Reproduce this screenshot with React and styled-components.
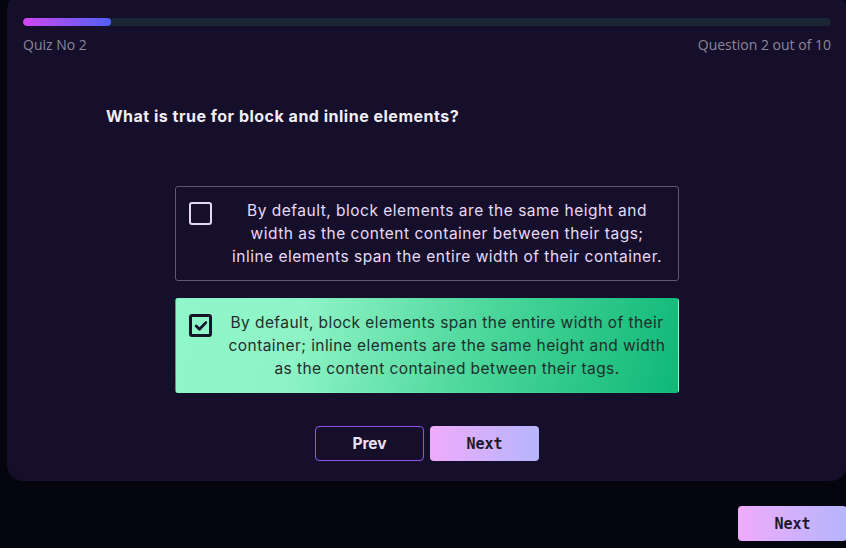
import React, { useState } from 'react'
import styled, { createGlobalStyle } from 'styled-components'

const GlobalStyle = createGlobalStyle`
  html, body {
    margin: 0;
    padding: 0;
    background: #05050f;
    overflow: hidden;
  }
  * { box-sizing: border-box; }
`;

const options = [
  { text: 'By default, block elements are the same height and width as the content container between their tags; inline elements span the entire width of their container.', spacing: 0.5 },
  { text: 'By default, block elements span the entire width of their container; inline elements are the same height and width as the content contained between their tags.', spacing: 0.42 },
];

function CheckBox({ checked }) {
  return (
    <Box checked={checked}>
      {checked && (
        <svg width="14" height="12" viewBox="0 0 14 12">
          <path d="M2.2 6 L5.5 9.2 L11.8 2.6" fill="none" stroke="#141428" strokeWidth="2.8" strokeLinecap="round" strokeLinejoin="round" />
        </svg>
      )}
    </Box>
  );
}

function App() {
  const [selected, setSelected] = useState(1);

  return <>
    <GlobalStyle />
    <Page>
      <Card>
        <Track>
          <Fill style={{ width: `${(2 / 10) * 100 * 0.545}%` }} />
        </Track>
        <Header>
          <span>Quiz No 2</span>
          <span>Question 2 out of 10</span>
        </Header>
        <Question>What is true for block and inline elements?</Question>
        <Options>
          {options.map((opt, i) => (
            <Option key={i} checked={selected === i} onClick={() => setSelected(i)}>
              <CheckBox checked={selected === i} />
              <OptionText checked={selected === i} spacing={opt.spacing}>{opt.text}</OptionText>
            </Option>
          ))}
        </Options>
        <Buttons>
          <PrevButton>Prev</PrevButton>
          <NextButton>Next</NextButton>
        </Buttons>
      </Card>
      <Footer>
        <NextButton>Next</NextButton>
      </Footer>
    </Page>
  </>
}

export default App

const Page = styled.div`
    width: 846px;
    height: 548px;
    padding-left: 7px;
    margin-top: -6px;
`;
const Card = styled.div`
    width: 840px;
    background: #150f2b;
    border-radius: 16px;
    padding: 24px 16px 20px 16px;
    display: flex;
    flex-direction: column;
`;
const Track = styled.div`
    height: 8px;
    width: 808px;
    border-radius: 4px;
    background: #1a2535;
    overflow: hidden;
`;
const Fill = styled.div`
    height: 100%;
    border-radius: 4px;
    background: linear-gradient(90deg, #d246f2, #4f60f8);
`;
const Header = styled.div`
    width: 808px;
    margin-top: 10px;
    display: flex;
    justify-content: space-between;
    font-family: "Open Sans", sans-serif;
    font-size: 14px;
    line-height: 18px;
    color: #8b8799;
`;
const Question = styled.div`
    margin: 52px 0 0 83px;
    font-family: Inter, sans-serif;
    font-weight: 700;
    font-size: 16px;
    line-height: 20px;
    letter-spacing: 0.5px;
    color: #f1eef6;
`;
const Options = styled.div`
    margin-top: 60px;
    display: flex;
    flex-direction: column;
    align-items: center;
    gap: 17px;
`;
const Option = styled.div`
    width: 504px;
    height: 95px;
    display: flex;
    align-items: flex-start;
    padding: 12px 12px 0 13px;
    gap: 16px;
    border-radius: 3px;
    cursor: pointer;
    border: 1px solid ${p => p.checked ? 'transparent' : '#5f5a72'};
    background: ${p => p.checked ? 'linear-gradient(105deg, #90f7ca 0%, #8ef3c6 25%, #4cd79b 60%, #0fb877 100%)' : 'transparent'};
`;
const Box = styled.div`
    flex: none;
    width: 23px;
    height: 23px;
    margin-top: 3px;
    border-radius: 3px;
    border: ${p => p.checked ? '3px solid #141428' : '2.5px solid #e6d6f6'};
    display: flex;
    align-items: center;
    justify-content: center;
`;
const OptionText = styled.div`
    flex: 1;
    text-align: center;
    font-family: Inter, sans-serif;
    font-size: 15.5px;
    line-height: 23px;
    letter-spacing: ${p => p.spacing}px;
    color: ${p => p.checked ? '#1e2e2a' : '#e8d9f6'};
`;
const Buttons = styled.div`
    margin-top: 33px;
    display: flex;
    justify-content: center;
    gap: 6px;
`;
const PrevButton = styled.div`
    width: 109px;
    height: 35px;
    display: flex;
    align-items: center;
    justify-content: center;
    border: 1px solid #8a55e6;
    border-radius: 4px;
    cursor: pointer;
    font-family: Inter, sans-serif;
    font-weight: 700;
    font-size: 15.5px;
    color: #ebe2f6;
`;
const NextButton = styled.div`
    width: 109px;
    height: 35px;
    display: flex;
    align-items: center;
    justify-content: center;
    border-radius: 4px;
    cursor: pointer;
    background: linear-gradient(90deg, #efabfb, #b5b5fd);
    font-family: "DejaVu Sans Mono", monospace;
    font-weight: 700;
    font-size: 15px;
    color: #1c1a2a;
`;
const Footer = styled.div`
    margin-top: 25px;
    display: flex;
    justify-content: flex-end;
    width: 840px;
`;
